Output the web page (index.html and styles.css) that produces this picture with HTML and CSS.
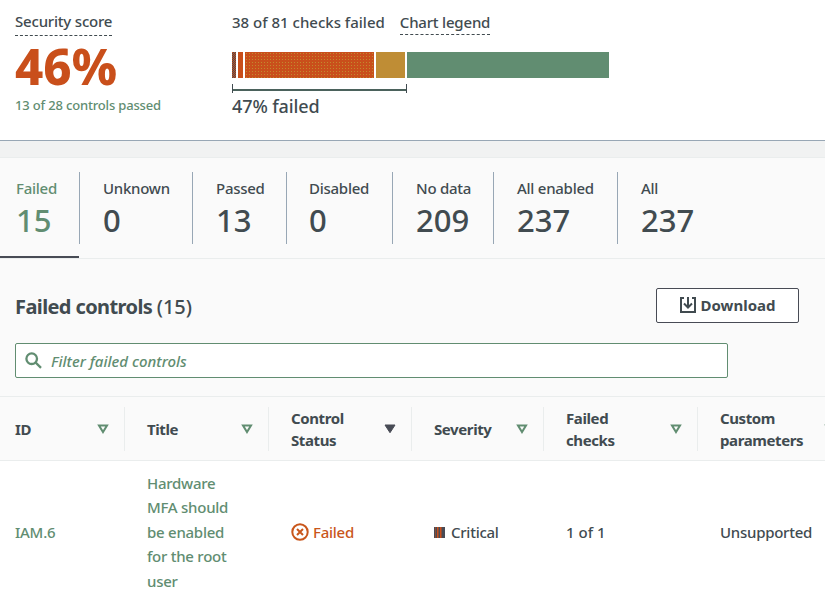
FILE: index.html
```html
<!DOCTYPE html>
<html lang="en">
<head>
<meta charset="utf-8">
<title>Security controls</title>
<link rel="stylesheet" href="styles.css">
</head>
<body>
<header class="summary">
  <section class="score">
    <span class="hint">Security score</span>
    <div class="percent">46%</div>
    <div class="passed">13 of 28 controls passed</div>
  </section>
  <section class="chart">
    <div class="caption"><span class="checks">38 of 81 checks failed</span><span class="hint legend">Chart legend</span></div>
    <div class="bar"><i class="critical"></i><i class="high"></i><i class="medium"></i><i class="low"></i><i class="ok"></i></div>
    <div class="bracket"></div>
    <div class="failed-share">47% failed</div>
  </section>
</header>
<div class="strip"></div>
<main>
  <nav class="tabs">
    <a class="tab active t1"><span>Failed</span><b>15</b></a>
    <a class="tab t2"><span>Unknown</span><b>0</b></a>
    <a class="tab t3"><span>Passed</span><b>13</b></a>
    <a class="tab t4"><span>Disabled</span><b>0</b></a>
    <a class="tab t5"><span>No data</span><b>209</b></a>
    <a class="tab t6"><span>All enabled</span><b>237</b></a>
    <a class="tab t7"><span>All</span><b>237</b></a>
  </nav>
  <div class="title-row">
    <h2><span class="name">Failed controls</span> <span class="count">(15)</span></h2>
    <button class="download">
      <svg width="16" height="16" viewBox="0 0 16 16" fill="none" stroke="currentColor" stroke-width="2"><path d="M4 1H1v14h14V1h-3M8 0v10M4 6.5l4 4 4-4"/></svg>
      <span>Download</span>
    </button>
  </div>
  <div class="search">
    <svg width="17" height="17" viewBox="0 0 17 17" fill="none" stroke="currentColor" stroke-width="2.3"><circle cx="6.7" cy="6.7" r="5.3"/><path d="M10.7 10.7l5.3 5.1"/></svg>
    <span>Filter failed controls</span>
  </div>
  <div class="table">
    <div class="row head">
      <div class="cell"><span>ID</span><svg class="sort" viewBox="0 0 12 10"><path d="M2 1.5h8L6 8z"/></svg></div>
      <div class="cell"><span>Title</span><svg class="sort" viewBox="0 0 12 10"><path d="M2 1.5h8L6 8z"/></svg></div>
      <div class="cell"><span>Control<br>Status</span><svg class="sort on" viewBox="0 0 12 10"><path d="M1 1h10L6 8.7z"/></svg></div>
      <div class="cell"><span>Severity</span><svg class="sort" viewBox="0 0 12 10"><path d="M2 1.5h8L6 8z"/></svg></div>
      <div class="cell"><span>Failed<br>checks</span><svg class="sort" viewBox="0 0 12 10"><path d="M2 1.5h8L6 8z"/></svg></div>
      <div class="cell"><span>Custom<br>parameters</span><svg class="sort" viewBox="0 0 12 10"><path d="M2 1.5h8L6 8z"/></svg></div>
    </div>
    <div class="row data">
      <div class="cell link id">IAM.6</div>
      <div class="cell link desc">Hardware<br>MFA should<br>be enabled<br>for the root<br>user</div>
      <div class="cell status"><svg width="18" height="18" viewBox="0 0 18 18" fill="none" stroke="currentColor" stroke-width="2"><circle cx="9" cy="9" r="7.7"/><path d="M6 6l6 6M12 6l-6 6"/></svg><span>Failed</span></div>
      <div class="cell severity"><i></i><span>Critical</span></div>
      <div class="cell of">1 of 1</div>
      <div class="cell custom">Unsupported</div>
    </div>
  </div>
</main>
</body>
</html>
```
FILE: styles.css
```css
* { box-sizing: border-box; }
body {
  margin: 0;
  width: 825px;
  height: 599px;
  overflow: hidden;
  background: #fff;
  color: #414b50;
  font: 500 15px/22px "Noto Sans", "Open Sans", sans-serif;
  letter-spacing: -.26px;
}
i { display: block; }
.summary { display: flex; height: 141px; padding: 11px 15px 0; border-bottom: 1px solid #98a7b5; }
.score { width: 217px; }
.hint { display: block; width: max-content; height: 25px; line-height: 21px; border-bottom: 1px dashed #414b50; letter-spacing: -.2px; }
.legend { height: 24px; line-height: 22px; }
.percent { font-size: 49px; line-height: 60px; font-weight: 800; color: #c94f1b; height: 60px; letter-spacing: 0; }
.passed { font-size: 13px; line-height: 18px; color: #618d71; letter-spacing: -.17px; }
.caption { display: flex; gap: 15px; height: 41px; }
.checks { letter-spacing: 0; }
.bar { display: flex; gap: 2px; height: 26px; width: 377px; }
.critical { width: 4px; background: repeating-linear-gradient(#c94f1b 0 1px, #484b55 1px 2px) 0 0 / 1px 100% no-repeat, repeating-linear-gradient(#484b55 0 1px, #c94f1b 1px 2px) 1px 0 / 1px 100% no-repeat, repeating-linear-gradient(#c94f1b 0 1px, #484b55 1px 2px) 2px 0 / 1px 100% no-repeat, repeating-linear-gradient(#484b55 0 1px, #c94f1b 1px 2px) 3px 0 / 1px 100% no-repeat; }
.high { width: 5px; background: #c94f1b; }
.medium { width: 129px; background: radial-gradient(circle at 1.5px 1.5px, #c28a2e 0 .6px, transparent .7px) 0 0 / 3px 3px, #c94f1b; }
.low { width: 29px; background: #bf8d35; }
.ok { flex: 1; background: #618d71; }
.bracket { width: 175px; height: 9px; margin-top: 6px; border: solid #414b50; border-width: 0 1px; background: linear-gradient(#4b625c, #4b625c) 0 5px / 100% 2px no-repeat; }
.failed-share { margin-top: 1px; font-size: 18px; line-height: 24px; letter-spacing: -.1px; }
.strip { height: 17px; background: #f1f2f2; border-bottom: 1px solid #eaeded; }
main { background: #fafafa; }
.tabs { display: flex; height: 101px; padding-top: 14px; border-bottom: 1px solid #eaeded; }
.tab { display: flex; flex-direction: column; height: 72px; padding: 5px 0 0 23px; border-right: 1px solid #98a7b5; }
.tab b { font-size: 31px; line-height: 34px; margin-top: 4px; font-weight: 500; letter-spacing: 0; }
.t1 { width: 80px; padding-left: 16px; color: #618d71; position: relative; }
.t1::after { content: ""; position: absolute; left: 0; top: 84px; width: 79px; height: 2px; background: #484b55; }
.t2 { width: 113px; }
.t3 { width: 94px; }
.t4 { width: 106px; padding-left: 22px; }
.t5 { width: 101px; }
.t6 { width: 124px; }
.t7 { border: 0; }
.title-row { display: flex; justify-content: space-between; align-items: center; height: 35px; margin: 29px 26px 0 15px; }
h2 { margin: 0; font-size: 20px; line-height: 28px; font-weight: 700; letter-spacing: -.6px; padding-top: 3px; }
.count { font-weight: 500; letter-spacing: -.1px; }
.download { display: flex; align-items: center; justify-content: center; gap: 5px; width: 143px; height: 35px; padding: 0 0 2px; background: #fff; border: 1px solid #484b55; border-radius: 2px; color: #414b50; font: 700 15px/22px "Noto Sans", sans-serif; }
.search { display: flex; align-items: center; gap: 9px; width: 713px; height: 35px; margin: 20px 0 18px 15px; padding-left: 9px; background: #fff; border: 1px solid #618d71; border-radius: 2px; color: #618d71; font-style: italic; letter-spacing: .02px; }
.row { display: grid; grid-template-columns: 125px 144px 143px 132px 154px 154px; width: 852px; }
.cell { display: flex; align-items: center; padding-left: 22px; }
.cell:first-child { padding-left: 15px; }
.head { height: 65px; border: solid #eaeded; border-width: 1px 0; padding: 10px 0 9px; font-weight: 700; letter-spacing: -.4px; }
.head .cell { justify-content: space-between; border-right: 1px solid #eaeded; padding-right: 15px; }
.sort { width: 12px; height: 10px; fill: none; stroke: #618d71; stroke-width: 2; }
.sort.on { fill: #484b55; stroke: #484b55; stroke-width: 1; }
.data { height: 145px; padding-bottom: 3px; background: #fff; }
.link { color: #618d71; }
.desc { line-height: 24.4px; }
.status { color: #c9561b; gap: 4px; }
.severity { gap: 6px; }
.severity i { width: 11px; height: 11px; background: linear-gradient(90deg, #484b55 1px, #8a4d36 1px 2px, #484b55 2px 3px, #c94f1b 3px 4px, #8a4d36 4px 5px, #484b55 5px 6px, #c94f1b 6px 7px, #8a4d36 7px 8px, #484b55 8px); }
.of { letter-spacing: 0; }
```
